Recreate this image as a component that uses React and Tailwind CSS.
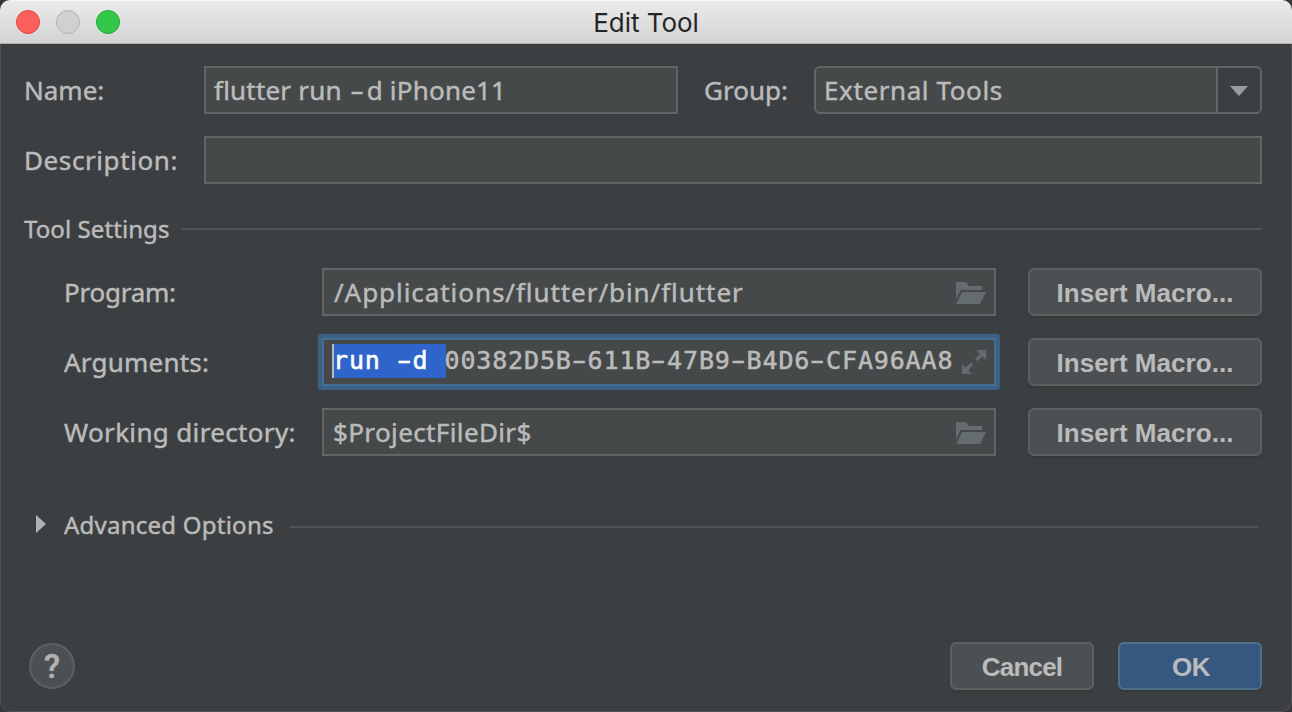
import React from 'react';

const TEXT = 'whitespace-pre [-webkit-text-stroke:0.45px_#bbbbbb]';
const LABEL = `${TEXT} text-[26px] leading-[48px]`;
const VALUE = `${TEXT} text-[26px] leading-[44px]`;
const HEADING = `${TEXT} text-[24px] leading-[46px]`;
const FIELD = 'h-12 border-2 border-[#646464] bg-[#45494a]';

function Dash({ className }) {
  return (
    <span className={`inline-flex justify-center ${className}`}>
      <span className="inline-block scale-x-[1.65]">-</span>
    </span>
  );
}

function MonoText({ text }) {
  return text.split('-').map((part, i) => (
    <React.Fragment key={i}>
      {i > 0 && <Dash className="w-[15.9px]" />}
      {part}
    </React.Fragment>
  ));
}

function FolderIcon() {
  return (
    <svg width="30" height="22" viewBox="0 0 30 22" fill="#646c70" className="shrink-0">
      <path d="M0 0H10L13 4H26V8H4.8L0 17.5Z" />
      <path d="M6 10H30L24 22H0Z" />
    </svg>
  );
}

function ExpandIcon() {
  return (
    <svg width="24" height="24" viewBox="0 0 24 24" fill="#646c70" className="shrink-0">
      <path d="M14 0H24V10L20.4 6.4L15 11.2L13 9.2L17.8 3.8Z" />
      <path d="M0 14L3.6 17.6L9 12.8L11 14.8L6.2 20.2L10 24H0Z" />
    </svg>
  );
}

function Button({ className, children }) {
  return (
    <button
      className={`flex h-12 items-center justify-center rounded-md border-2 pt-0.5 font-['Liberation_Sans',sans-serif] text-[26px] leading-none font-bold whitespace-nowrap shadow-[0_2px_1px_#36393a] ${className}`}
    >
      {children}
    </button>
  );
}

function MacroRow({ label, field }) {
  return (
    <div className="flex h-12 items-center">
      <div className="w-[258px] shrink-0">{label}</div>
      {field}
      <Button className="ml-8 w-[234px] border-[#5e6060] bg-[#4c5052] tracking-[0.05px]">Insert Macro...</Button>
    </div>
  );
}

export default function App() {
  return (
    <div className="h-[712px] w-[1292px] overflow-hidden bg-[#37363d]">
      <div className="flex h-full flex-col overflow-hidden rounded-[10px] bg-[#3c3f41] font-['Noto_Sans',sans-serif] text-[#bbbbbb]">
        <header className="grid h-11 shrink-0 grid-cols-[1fr_auto_1fr] items-center border-t border-b border-t-[#f6f6f6] border-b-[#b1b1b1] bg-linear-to-b from-[#ebebeb] to-[#d3d3d3] px-4">
          <div className="flex gap-4">
            <span className="size-6 rounded-full border border-[#e2463f] bg-[#fc605c]" />
            <span className="size-6 rounded-full border border-[#b0b0b0] bg-[#d0d0d0]" />
            <span className="size-6 rounded-full border border-[#1fa931] bg-[#34c84a]" />
          </div>
          <h1 className="pt-0.5 font-['Inter',sans-serif] text-[26px] leading-none tracking-[-0.05px] text-[#262626]">
            Edit Tool
          </h1>
        </header>

        <main className="flex grow flex-col rounded-b-[10px] border-x border-b border-[#505355] pt-[22px] pr-[29px] pl-[23px]">
          <div className="flex h-12 shrink-0">
            <div className={`${LABEL} w-[180px] shrink-0`}>Name:</div>
            <div className={`${FIELD} ${VALUE} w-[474px] shrink-0 pl-2 tracking-[0.2px]`}>
              flutter run <Dash className="w-[18px]" />d iPhone11
            </div>
            <div className={`${LABEL} w-[136px] shrink-0 pl-[26px]`}>Group:</div>
            <div className={`${FIELD} ${VALUE} flex grow overflow-hidden rounded-md pl-2 tracking-[0.6px]`}>
              <span className="grow">External Tools</span>
              <span className="flex w-11 items-center justify-center border-l-2 border-[#646464] bg-[#3c3f41]">
                <svg width="18" height="10" viewBox="0 0 18 10" fill="#9a9da0" className="mt-0.5">
                  <path d="M0 0H18L9 10Z" />
                </svg>
              </span>
            </div>
          </div>

          <div className="mt-[22px] flex h-12 shrink-0">
            <div className={`${LABEL} w-[180px] shrink-0 tracking-[0.6px]`}>Description:</div>
            <div className={`${FIELD} grow`} />
          </div>

          <div className="mt-[21px] flex h-12 shrink-0 items-center">
            <h2 className={`${HEADING} w-[158px] shrink-0 tracking-[0.08px]`}>Tool Settings</h2>
            <div className="h-0.5 grow bg-[#515354]" />
          </div>

          <div className="mt-[15px] flex shrink-0 flex-col gap-[22px] pl-10">
            <MacroRow
              label={<div className={`${LABEL} tracking-[-0.25px]`}>Program:</div>}
              field={
                <div className={`${FIELD} flex w-[674px] shrink-0 items-center justify-between pt-0.5 pr-2 pl-2.5`}>
                  <span className={`${VALUE} -mt-0.5 tracking-[0.94px]`}>/Applications/flutter/bin/flutter</span>
                  <FolderIcon />
                </div>
              }
            />
            <MacroRow
              label={<div className={`${LABEL} tracking-[0.22px]`}>Arguments:</div>}
              field={
                <div className="flex h-12 w-[674px] shrink-0 items-center justify-between rounded-[1px] border-2 border-[#466d94] bg-[#45494a] px-2 shadow-[0_0_0_4px_#3d6185]">
                  <div className="-mt-0.5 flex w-[620px] overflow-hidden font-['DejaVu_Sans_Mono',monospace] text-[25px] leading-[34px] tracking-[0.85px] whitespace-pre [-webkit-text-stroke:0.55px]">
                    <span className="h-[34px] w-[114px] shrink-0 border-l-2 border-[#bbbbbb] bg-[#2f65ca] text-white">
                      <span className="-ml-px">
                        <MonoText text="run -d " />
                      </span>
                    </span>
                    <span className="-ml-[1.5px]">
                      <MonoText text="00382D5B-611B-47B9-B4D6-CFA96AA8" />
                    </span>
                  </div>
                  <ExpandIcon />
                </div>
              }
            />
            <MacroRow
              label={<div className={`${LABEL} tracking-[0.34px]`}>Working directory:</div>}
              field={
                <div className={`${FIELD} flex w-[674px] shrink-0 items-center justify-between pt-0.5 pr-2 pl-[9px]`}>
                  <span className={`${VALUE} -mt-0.5 tracking-[0.38px]`}>$ProjectFileDir$</span>
                  <FolderIcon />
                </div>
              }
            />
          </div>

          <div className="mt-[45px] flex h-12 shrink-0 items-center pr-1 pl-3">
            <svg width="10" height="18" viewBox="0 0 10 18" fill="#afb1b3" className="mr-[18px] -mt-0.5 shrink-0">
              <path d="M0 0L10 9L0 18Z" />
            </svg>
            <h2 className={`${HEADING} w-[226px] shrink-0 tracking-[0.24px]`}>Advanced Options</h2>
            <div className="mt-1 h-0.5 grow bg-[#515354]" />
          </div>

          <footer className="mt-auto mb-[21px] flex h-12 shrink-0 items-center gap-6 pl-[5px]">
            <button className="mr-auto flex size-[46px] items-center justify-center rounded-full border-2 border-[#5e6060] bg-[#4c5052] font-['Roboto',sans-serif] text-[33px] leading-none font-medium text-[#afb1b3] [-webkit-text-stroke:0.5px]">
              ?
            </button>
            <Button className="w-36 border-[#5e6060] bg-[#4c5052] tracking-[-0.8px]">Cancel</Button>
            <Button className="w-36 border-[#4c708c] bg-[#365880] pl-0.5 tracking-[-0.5px]">OK</Button>
          </footer>
        </main>
      </div>
    </div>
  );
}
